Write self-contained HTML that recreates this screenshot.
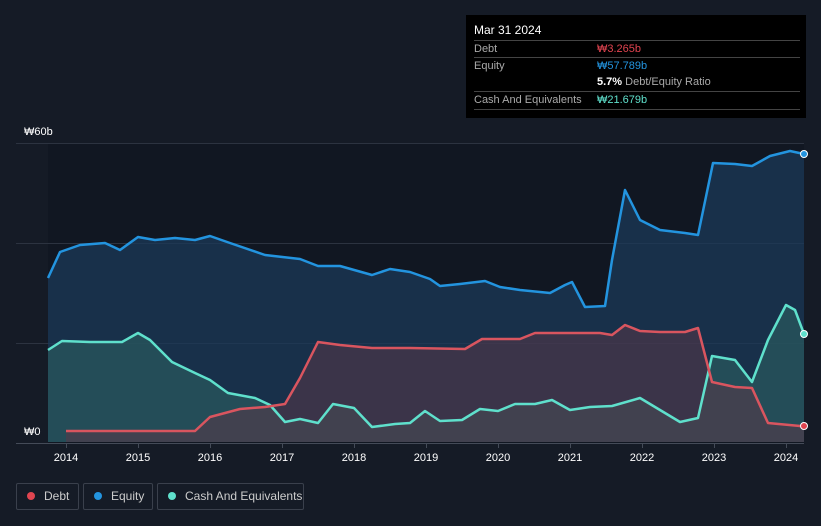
<!DOCTYPE html><html><head><style>
body{margin:0;width:821px;height:526px;background:#151b26;font-family:"Liberation Sans",sans-serif;overflow:hidden;position:relative}
.tt{position:absolute;left:466px;top:15px;width:340px;height:103px;background:#000;color:#fff;font-size:11px}
.row{position:absolute;left:8px;width:326px;border-top:1px solid #444;height:16px;line-height:16px;color:#aaa}
.row span{position:absolute;left:123px}
.lg{position:absolute;top:483px;height:27px;border:1px solid #3a404c;border-radius:2px;color:#ccc;font-size:12px;line-height:25px;box-sizing:border-box;white-space:nowrap}
.lg i{display:inline-block;width:8px;height:8px;border-radius:50%;margin:0 9px 0 10px}
</style></head><body>
<svg width="821" height="526" style="position:absolute;left:0;top:0">
<rect x="48" y="143" width="756" height="300" fill="#111722"/>
<g stroke="#2c3340" stroke-width="1"><line x1="16" y1="143.5" x2="804" y2="143.5"/><line x1="16" y1="243.5" x2="804" y2="243.5"/><line x1="16" y1="343.5" x2="804" y2="343.5"/></g>
<path d="M48,278 L60,252 80,245 105,243 120,250 138,237 155,240 175,238 195,240 210,236 230,243 265,255 300,259 318,266 340,266 372,275 390,269 410,272 430,279 440,286 460,284 485,281 500,287 520,290 550,293 565,285 572,282 585,307 605,306 612,260 625,190 640,220 660,230 685,233 698,235 713,163 735,164 752,166 770,156 790,151 804,154 L804,442 L48,442Z" fill="#1b3a58" fill-opacity=".75"/>
<path d="M48,350 L62,341 90,342 122,342 138,333 150,340 172,362 195,373 210,380 228,393 255,398 270,405 285,422 300,419 318,423 333,404 354,408 372,427 395,424 410,423 425,411 440,421 462,420 480,409 498,411 515,404 535,404 552,400 570,410 590,407 612,406 640,398 660,410 680,422 698,418 712,356 735,360 752,382 768,340 786,305 795,310 804,334 L804,442 L48,442Z" fill="#2a5a5e" fill-opacity=".7"/>
<path d="M66,431 L195,431 210,417 240,409 265,407 285,404 300,378 318,342 340,345 372,348 410,348 465,349 482,339 520,339 535,333 600,333 612,335 625,325 640,331 660,332 685,332 698,328 712,382 735,387 752,388 768,423 800,426 804,426 L804,442 L66,442Z" fill="#5a3848" fill-opacity=".55"/>
<g fill="none" stroke-width="2.5" stroke-linejoin="round">
<path stroke="#2394df" d="M48,278 L60,252 80,245 105,243 120,250 138,237 155,240 175,238 195,240 210,236 230,243 265,255 300,259 318,266 340,266 372,275 390,269 410,272 430,279 440,286 460,284 485,281 500,287 520,290 550,293 565,285 572,282 585,307 605,306 612,260 625,190 640,220 660,230 685,233 698,235 713,163 735,164 752,166 770,156 790,151 804,154"/>
<path stroke="#5fe0cc" d="M48,350 L62,341 90,342 122,342 138,333 150,340 172,362 195,373 210,380 228,393 255,398 270,405 285,422 300,419 318,423 333,404 354,408 372,427 395,424 410,423 425,411 440,421 462,420 480,409 498,411 515,404 535,404 552,400 570,410 590,407 612,406 640,398 660,410 680,422 698,418 712,356 735,360 752,382 768,340 786,305 795,310 804,334"/>
<path stroke="#d9555f" d="M66,431 L195,431 210,417 240,409 265,407 285,404 300,378 318,342 340,345 372,348 410,348 465,349 482,339 520,339 535,333 600,333 612,335 625,325 640,331 660,332 685,332 698,328 712,382 735,387 752,388 768,423 800,426 804,426"/>
</g>
<circle cx="804" cy="154" r="3.5" fill="#2394df" stroke="#fff"/><circle cx="804" cy="334" r="3.5" fill="#5fe0cc" stroke="#fff"/><circle cx="804" cy="426" r="3.5" fill="#e04550" stroke="#fff"/>
<line x1="16" y1="443.5" x2="804" y2="443.5" stroke="#444b58"/>
<g stroke="#444b58"><line x1="66.5" y1="443" x2="66.5" y2="448"/><line x1="138.5" y1="443" x2="138.5" y2="448"/><line x1="210.5" y1="443" x2="210.5" y2="448"/><line x1="282.5" y1="443" x2="282.5" y2="448"/><line x1="354.5" y1="443" x2="354.5" y2="448"/><line x1="426.5" y1="443" x2="426.5" y2="448"/><line x1="498.5" y1="443" x2="498.5" y2="448"/><line x1="570.5" y1="443" x2="570.5" y2="448"/><line x1="642.5" y1="443" x2="642.5" y2="448"/><line x1="714.5" y1="443" x2="714.5" y2="448"/><line x1="786.5" y1="443" x2="786.5" y2="448"/></g>
<g fill="#fff" font-size="11" text-anchor="middle" font-family="Liberation Sans"><text x="66" y="461">2014</text><text x="138" y="461">2015</text><text x="210" y="461">2016</text><text x="282" y="461">2017</text><text x="354" y="461">2018</text><text x="426" y="461">2019</text><text x="498" y="461">2020</text><text x="570" y="461">2021</text><text x="642" y="461">2022</text><text x="714" y="461">2023</text><text x="786" y="461">2024</text></g>
<text x="24" y="135" fill="#fff" font-size="11" font-family="Liberation Sans">₩60b</text>
<text x="24" y="435" fill="#fff" font-size="11" font-family="Liberation Sans">₩0</text>
</svg>
<div class="tt">
<div style="position:absolute;left:8px;top:8px;font-size:12px">Mar 31 2024</div>
<div class="row" style="top:25px">Debt<span style="color:#e0434f">₩3.265b</span></div>
<div class="row" style="top:42px">Equity<span style="color:#2394df">₩57.789b</span></div>
<div class="row" style="top:59px;border-top:none"><span style="color:#aaa"><b style="color:#fff">5.7%</b> Debt/Equity Ratio</span></div>
<div class="row" style="top:76px">Cash And Equivalents<span style="color:#5fe0cc">₩21.679b</span></div>
<div style="position:absolute;left:8px;top:94px;width:326px;border-top:1px solid #444"></div>
</div>
<div class="lg" style="left:16px;width:63px"><i style="background:#e04550"></i>Debt</div>
<div class="lg" style="left:83px;width:70px"><i style="background:#2394df"></i>Equity</div>
<div class="lg" style="left:157px;width:147px"><i style="background:#5fe0cc"></i>Cash And Equivalents</div>
</body></html>
